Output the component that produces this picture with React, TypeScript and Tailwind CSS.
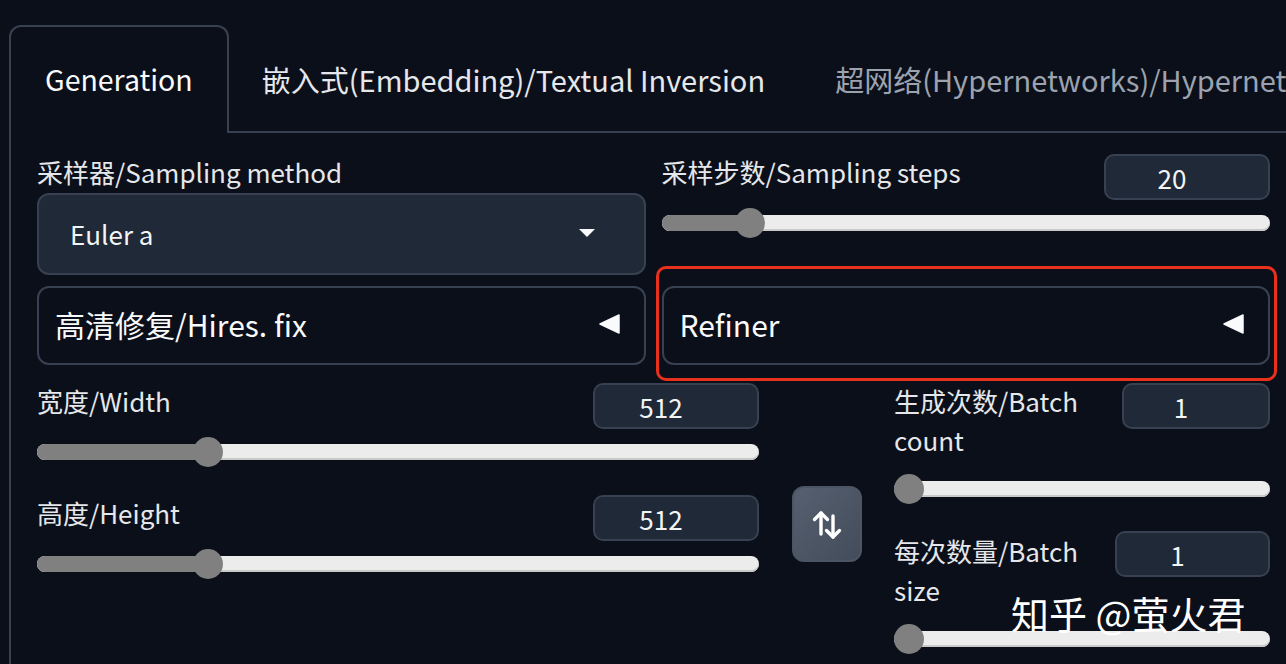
import React from 'react'

const font = { fontFamily: '"Noto Sans CJK SC", "Noto Sans", sans-serif' }

function NumberBox({ value, className = '' }: { value: string; className?: string }) {
  return (
    <div
      className={`flex h-[46px] shrink-0 items-center justify-center rounded-[10px] border-2 border-[#374151] bg-[#1f2937] pr-[30px] text-[26px] text-[#f3f4f6] ${className}`}
    >
      {value}
    </div>
  )
}

function Slider({ value, min, max }: { value: number; min: number; max: number }) {
  const p = (value - min) / (max - min)
  return (
    <div className="relative flex h-[32px] items-center">
      <div className="h-[16px] w-full overflow-hidden rounded-full bg-[#ececec] shadow-[inset_0_-2px_0_#c9c9c9]">
        <div className="h-full bg-[#808080]" style={{ width: `calc((100% - 30px) * ${p} + 15px)` }} />
      </div>
      <div
        className="absolute top-px h-[30px] w-[30px] rounded-full bg-[#808080]"
        style={{ left: `calc((100% - 30px) * ${p})` }}
      />
    </div>
  )
}

function Caret({ dir }: { dir: 'down' | 'left' }) {
  if (dir === 'down') {
    return (
      <svg width="16" height="8" viewBox="0 0 16 8">
        <polygon points="0,0 16,0 8,8" fill="#f9fafb" />
      </svg>
    )
  }
  return (
    <svg width="21" height="20" viewBox="0 0 21 20">
      <polygon points="20,1 20,19 1,10" fill="#f9fafb" stroke="#f9fafb" strokeWidth="1.5" strokeLinejoin="round" />
    </svg>
  )
}

function Accordion({ title }: { title: string }) {
  return (
    <div className="flex h-[79px] items-center justify-between rounded-[12px] border-2 border-[#374151] bg-[#0b0f19] pb-[3px] pl-[16px] pr-[24px] text-[30px] text-[#f9fafb]">
      <span>{title}</span>
      <Caret dir="left" />
    </div>
  )
}

function SwapIcon() {
  return (
    <svg width="34" height="34" viewBox="0 0 34 34" fill="none" stroke="#ffffff" strokeWidth="3.4" strokeLinecap="round" strokeLinejoin="round">
      <path d="M11 27V6" />
      <path d="M4.5 12.5L11 6l6.5 6.5" />
      <path d="M23 9v21" />
      <path d="M16.5 23.5L23 30l6.5-6.5" />
    </svg>
  )
}

export default function App() {
  return (
    <div className="relative h-[664px] w-[1286px] overflow-hidden bg-[#0b0f19] pl-[9px] pt-[25px]" style={font}>
      {/* tabs */}
      <div className="flex h-[108px] w-[1400px] whitespace-nowrap text-[28.5px]">
        <div className="rounded-t-[12px] border-2 border-b-0 border-[#374151] px-[34px] pt-[31px] leading-[42px] text-[#f9fafb]">
          Generation
        </div>
        <div className="flex flex-1 border-b-2 border-[#374151] pt-[33px] text-[29px] leading-[42px]">
          <div className="pl-[33px] pr-[36px] text-[#e5e7eb]">嵌入式(Embedding)/Textual Inversion</div>
          <div className="px-[34px] text-[#9ca3af]">超网络(Hypernetworks)/Hypernetworks</div>
        </div>
      </div>

      {/* panel */}
      <div className="h-[600px] w-[1400px] border-l-2 border-[#374151] pl-[26px] pt-[20px] text-[26px] text-[#e5e7eb]">
        <div className="grid w-[1233px] grid-cols-2 gap-x-[16px] gap-y-[11px]">
          <div className="flex flex-col">
            <div className="h-[40px] leading-[38px]">采样器/Sampling method</div>
            <div className="flex h-[82px] items-center justify-between rounded-[12px] border-2 border-[#374151] bg-[#1f2937] pb-[2px] pl-[31px] pr-[49px] text-[#f3f4f6]">
              <span>Euler a</span>
              <Caret dir="down" />
            </div>
          </div>
          <div className="flex flex-col pt-px">
            <div className="flex h-[47px] justify-between">
              <span className="leading-[36px]">采样步数/Sampling steps</span>
              <NumberBox value="20" className="w-[166px]" />
            </div>
            <div className="mt-[6px]">
              <Slider value={20} min={1} max={150} />
            </div>
          </div>

          <Accordion title="高清修复/Hires. fix" />
          <div className="relative">
            <Accordion title="Refiner" />
            <div className="pointer-events-none absolute -bottom-[16px] -left-[6px] -right-[7px] -top-[20px] rounded-[10px] border-[3px] border-[#e8311c]" />
          </div>
        </div>

        <div className="mt-[18px] flex w-[1234px]">
          <div className="flex w-[722px] flex-col">
            <div className="flex h-[46px] items-start justify-between">
              <span className="leading-[36px]">宽度/Width</span>
              <NumberBox value="512" className="w-[166px]" />
            </div>
            <div className="mt-[7px]">
              <Slider value={512} min={64} max={2048} />
            </div>
            <div className="mt-[27px] flex h-[46px] items-start justify-between">
              <span className="leading-[36px]">高度/Height</span>
              <NumberBox value="512" className="w-[166px]" />
            </div>
            <div className="mt-[7px]">
              <Slider value={512} min={64} max={2048} />
            </div>
          </div>

          <div className="ml-[33px] mt-[103px] flex h-[76px] w-[70px] items-center justify-center rounded-[12px] border-2 border-[#4b5563] bg-gradient-to-br from-[#566070] to-[#434c5a]">
            <SwapIcon />
          </div>

          <div className="ml-[32px] flex w-[376px] flex-col">
            <div className="flex items-start justify-between gap-[24px]">
              <span className="-mt-[2px] leading-[39px]">生成次数/Batch count</span>
              <NumberBox value="1" className="w-[148px]" />
            </div>
            <div className="mt-[14px]">
              <Slider value={1} min={1} max={100} />
            </div>
            <div className="mt-[26px] flex items-start justify-between gap-[24px]">
              <span className="leading-[39px]">每次数量/Batch size</span>
              <NumberBox value="1" className="w-[155px]" />
            </div>
            <div className="mt-[14px]">
              <Slider value={1} min={1} max={100} />
            </div>
          </div>
        </div>
      </div>

      {/* watermark */}
      <div className="absolute left-[1011px] top-[584px] text-[38px] text-white">
        知乎 @萤火君
      </div>
    </div>
  )
}
